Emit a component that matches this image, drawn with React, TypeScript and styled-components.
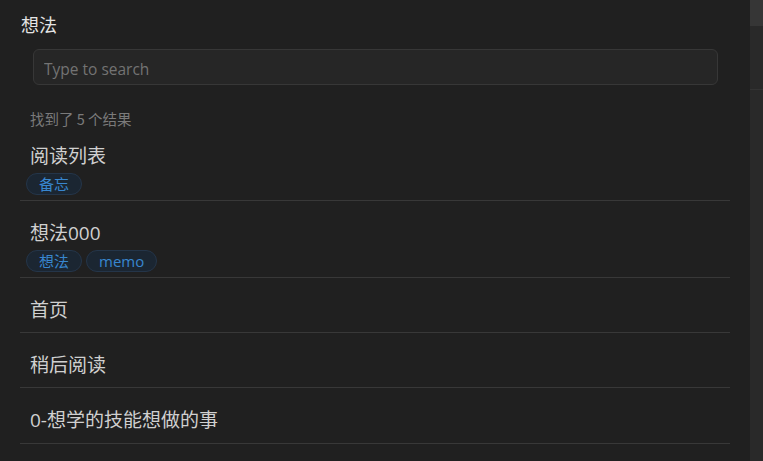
import React from "react";
import styled, { createGlobalStyle } from "styled-components";

const Global = createGlobalStyle`
  html, body { margin: 0; padding: 0; background: #202020; }
  body { font-family: "Open Sans", "Noto Sans CJK SC", sans-serif; }
  * { box-sizing: border-box; }
`;

const Page = styled.div`
  display: flex;
  width: 763px;
  height: 461px;
  background: #202020;
  overflow: hidden;
`;

const Main = styled.div`
  flex: 1;
  display: flex;
  flex-direction: column;
  min-width: 0;
`;

const Title = styled.h1`
  margin: 12px 0 0 21px;
  font-size: 18px;
  line-height: 24px;
  font-weight: 400;
  color: #e4e4e4;
  font-family: "Noto Sans CJK SC", sans-serif;
`;

const SearchInput = styled.input`
  margin: 13px 32px 0 33px;
  height: 36px;
  padding: 4px 10px 0;
  background: #262626;
  border: 1px solid #373737;
  border-radius: 6px;
  color: #ddd;
  font-family: "Open Sans", sans-serif;
  font-size: 15.5px;
  outline: none;
  &::placeholder { color: #737373; }
`;

const ResultCount = styled.div`
  margin: 24px 0 0 30px;
  font-size: 14.5px;
  line-height: 20px;
  color: #7a7a7a;
  font-family: "Noto Sans CJK SC", sans-serif;
`;

const List = styled.div`
  display: flex;
  flex-direction: column;
  margin: 0 20px;
`;

const Item = styled.div<{ $tagged: boolean }>`
  padding: 17px 10px ${(p) => (p.$tagged ? "5px" : "7px")};
  border-bottom: 1px solid #383838;
  &:first-child { padding-top: 12px; }
  &:last-child { padding-bottom: 8px; }
`;

const ItemTitle = styled.div`
  font-size: 19px;
  line-height: 30px;
  color: #d0d0d0;
  font-family: "Open Sans", "Noto Sans CJK SC", sans-serif;
`;

const Tags = styled.div`
  display: flex;
  gap: 4px;
  margin: 2px 0 0 -4px;
`;

const Tag = styled.span`
  height: 22px;
  line-height: 20px;
  padding: 0 12px;
  border-radius: 11px;
  border: 1px solid #243549;
  background: #1b2632;
  color: #3886cf;
  font-size: 15px;
  font-family: "Open Sans", "Noto Sans CJK SC", sans-serif;
`;

const ScrollTrack = styled.div`
  width: 13px;
  display: flex;
  flex-direction: column;
  background: #292929;
`;

const ScrollThumb = styled.div`
  height: 26px;
  background: #363636;
`;

const ScrollSection = styled.div`
  margin-top: 63px;
  flex: 1;
  border-top: 1px solid #333;
`;

const items: { title: string; tags: string[] }[] = [
  { title: "阅读列表", tags: ["备忘"] },
  { title: "想法000", tags: ["想法", "memo"] },
  { title: "首页", tags: [] },
  { title: "稍后阅读", tags: [] },
  { title: "0-想学的技能想做的事", tags: [] },
];

export default function App() {
  return (
    <Page>
      <Global />
      <Main>
        <Title>想法</Title>
        <SearchInput placeholder="Type to search" />
        <ResultCount>找到了 5 个结果</ResultCount>
        <List>
          {items.map((it) => (
            <Item key={it.title} $tagged={it.tags.length > 0}>
              <ItemTitle>{it.title}</ItemTitle>
              {it.tags.length > 0 && (
                <Tags>
                  {it.tags.map((t) => (
                    <Tag key={t}>{t}</Tag>
                  ))}
                </Tags>
              )}
            </Item>
          ))}
        </List>
      </Main>
      <ScrollTrack>
        <ScrollThumb />
        <ScrollSection />
      </ScrollTrack>
    </Page>
  );
}
